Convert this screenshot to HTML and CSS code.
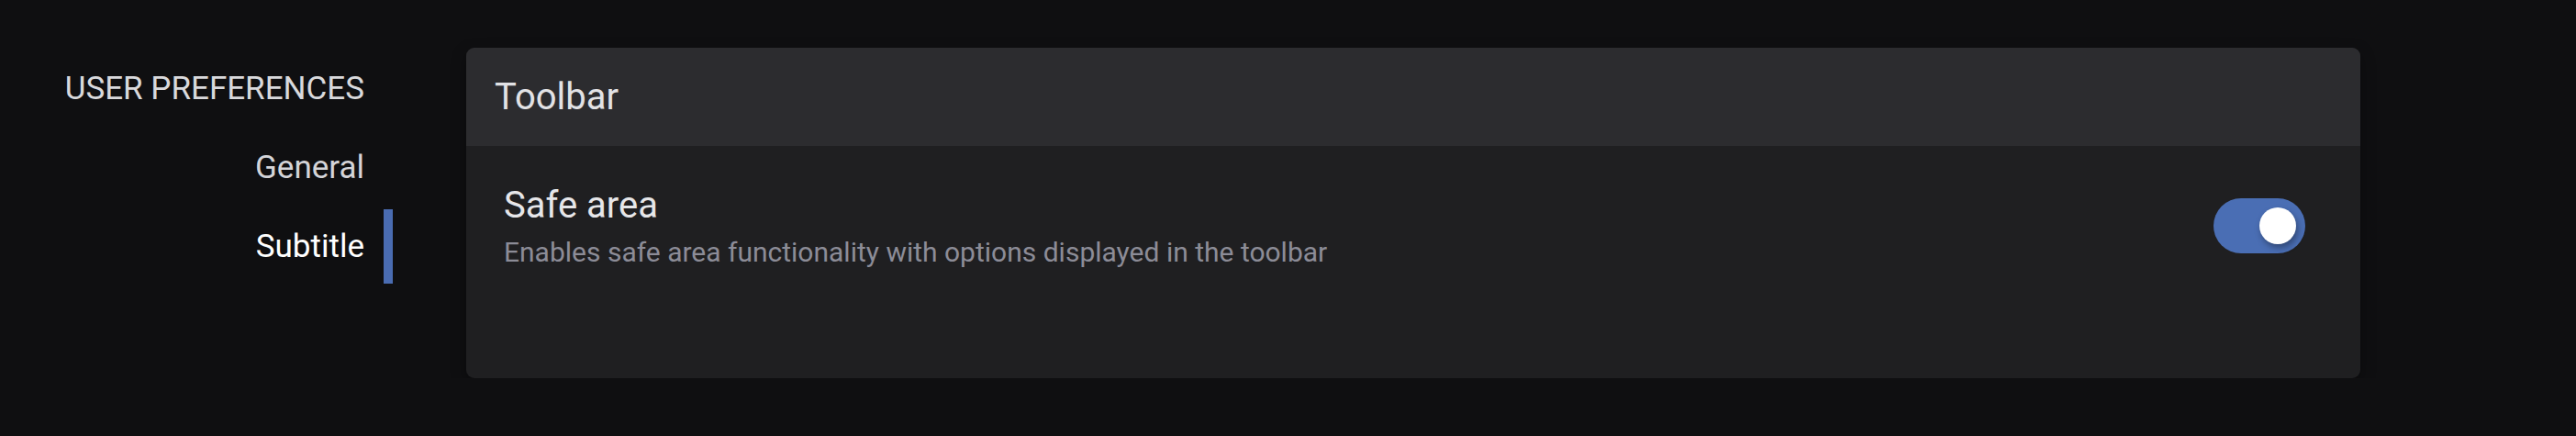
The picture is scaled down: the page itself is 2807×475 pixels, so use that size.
FILE: index.html
```html
<!DOCTYPE html>
<html lang="en">
<head>
<meta charset="utf-8">
<title>User preferences</title>
<link rel="stylesheet" href="styles.css">
</head>
<body>
<div class="page">
  <nav class="nav">
    <div class="nav-heading">USER PREFERENCES</div>
    <div class="nav-item">General</div>
    <div class="nav-item active">Subtitle</div>
  </nav>
  <section class="card">
    <header class="card-header">Toolbar</header>
    <div class="card-body">
      <div class="setting">
        <div class="setting-text">
          <div class="setting-title">Safe area</div>
          <div class="setting-desc">Enables safe area functionality with options displayed in the toolbar</div>
        </div>
        <div class="toggle on"><span class="knob"></span></div>
      </div>
    </div>
  </section>
</div>
</body>
</html>
```
FILE: styles.css
```css
html, body {
  margin: 0;
  padding: 0;
  background: #0f0f11;
  font-family: Roboto, "Liberation Sans", sans-serif;
}
.page {
  display: flex;
  align-items: flex-start;
  padding-top: 52px;
  gap: 80px;
}
.nav {
  width: 428px;
  margin-top: 4px;
  display: flex;
  flex-direction: column;
  gap: 5px;
}
.nav-heading,
.nav-item {
  height: 81px;
  box-sizing: border-box;
  display: flex;
  align-items: center;
  justify-content: flex-end;
  padding-right: 21px;
  border-right: 10px solid transparent;
  font-size: 35px;
  line-height: 41px;
}
.nav-heading {
  color: #d9d9dc;
}
.nav-item {
  color: #d4d4d8;
}
.nav-item.active {
  color: #ffffff;
  border-right-color: #4a6cb2;
}
.card {
  width: 2064px;
  border-radius: 9px;
  overflow: hidden;
  background: #1f1f21;
  box-shadow: 0 6px 16px rgba(0, 0, 0, 0.35);
}
.card-header {
  height: 107px;
  box-sizing: border-box;
  display: flex;
  align-items: center;
  padding-left: 31px;
  background: #2c2c2f;
  color: #e2e2e5;
  font-size: 40px;
}
.card-body {
  box-sizing: border-box;
  height: 253px;
  padding: 41px 60px 0 41px;
}
.setting {
  display: flex;
  align-items: center;
  justify-content: space-between;
}
.setting-text {
  display: flex;
  flex-direction: column;
  gap: 10px;
}
.setting-title {
  color: #e6e6e9;
  font-size: 40px;
}
.setting-desc {
  color: #8c8c97;
  font-size: 30px;
}
.toggle {
  width: 100px;
  height: 60px;
  border-radius: 30px;
  background: #4a6eb4;
  display: flex;
  align-items: center;
  justify-content: flex-end;
  padding: 0 10px;
  box-sizing: border-box;
}
.knob {
  width: 40px;
  height: 40px;
  border-radius: 50%;
  background: #ffffff;
  box-shadow: 2px 4px 7px rgba(0, 0, 0, 0.35);
}
```
